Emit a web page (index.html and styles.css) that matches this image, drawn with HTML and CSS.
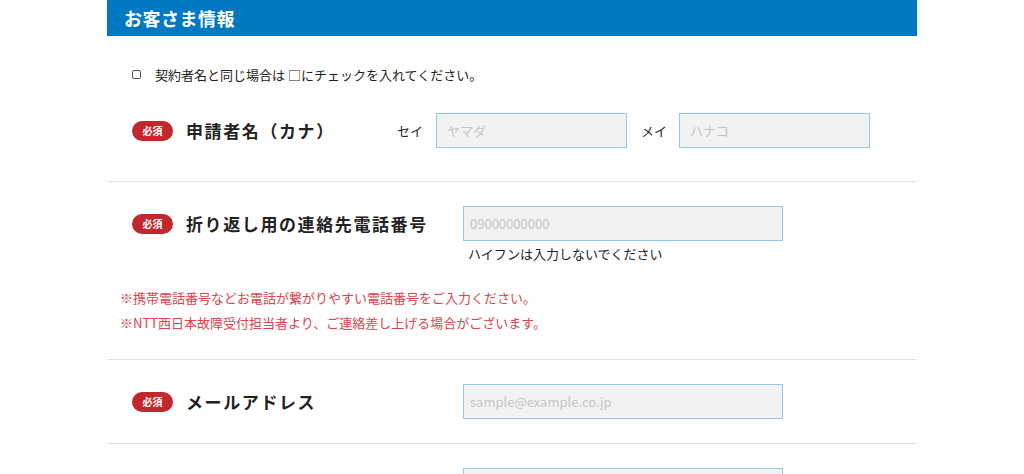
FILE: index.html
```html
<!DOCTYPE html>
<html lang="ja">
<head>
<meta charset="utf-8">
<title>お客さま情報</title>
<link rel="stylesheet" href="styles.css">
</head>
<body>
<section class="form-section">
  <h2 class="section-title">お客さま情報</h2>
  <div class="section-body">
    <label class="same-check">
      <input type="checkbox" class="check-box">
      <span>契約者名と同じ場合は □にチェックを入れてください。</span>
    </label>

    <div class="form-row row-name">
      <div class="field-line">
        <div class="field-head head-name">
          <span class="badge">必須</span>
          <span class="field-label">申請者名（カナ）</span>
        </div>
        <div class="name-group">
          <span class="sub-label">セイ</span>
          <input class="text-input input-half" type="text" placeholder="ヤマダ">
          <span class="sub-label sub-label-2">メイ</span>
          <input class="text-input input-half" type="text" placeholder="ハナコ">
        </div>
      </div>
    </div>

    <div class="form-row">
      <div class="field-line">
        <div class="field-head">
          <span class="badge">必須</span>
          <span class="field-label">折り返し用の連絡先電話番号</span>
        </div>
        <div class="field-body">
          <input class="text-input input-wide" type="text" placeholder="09000000000">
          <p class="hint">ハイフンは入力しないでください</p>
        </div>
      </div>
      <div class="notes">
        <p>※携帯電話番号などお電話が繋がりやすい電話番号をご入力ください。</p>
        <p>※NTT西日本故障受付担当者より、ご連絡差し上げる場合がございます。</p>
      </div>
    </div>

    <div class="form-row">
      <div class="field-line">
        <div class="field-head">
          <span class="badge">必須</span>
          <span class="field-label">メールアドレス</span>
        </div>
        <div class="field-body">
          <input class="text-input input-wide" type="text" placeholder="sample@example.co.jp">
        </div>
      </div>
    </div>

    <div class="form-row">
      <div class="field-line">
        <div class="field-head"></div>
        <div class="field-body">
          <input class="text-input input-wide" type="text">
        </div>
      </div>
    </div>
  </div>
</section>
</body>
</html>
```

FILE: styles.css
```css
* { box-sizing: border-box; }

html, body {
  margin: 0;
  padding: 0;
  background: #ffffff;
}

body {
  font-family: "Noto Sans CJK JP", "Noto Sans", sans-serif;
  color: #222222;
  overflow: hidden;
  height: 474px;
}

.form-section {
  width: 810px;
  margin: 0 auto;
}

.section-title {
  margin: 0;
  height: 36px;
  line-height: 36px;
  padding-left: 17px;
  background: #0079c2;
  color: #ffffff;
  font-size: 18px;
  font-weight: 700;
  letter-spacing: 0.5px;
}

.section-body {
  padding-top: 28px;
}

.same-check {
  display: flex;
  align-items: center;
  height: 20px;
  padding-left: 25px;
  font-size: 13px;
  color: #222222;
  gap: 14px;
}

.check-box {
  appearance: none;
  -webkit-appearance: none;
  margin: 0;
  width: 9px;
  height: 9px;
  border: 1px solid #555555;
  border-radius: 2px;
  background: #ffffff;
}

.form-row {
  padding: 24px 0 24px 0;
  border-bottom: 1px solid #e3e3e3;
}

.row-name {
  padding-top: 29px;
  padding-bottom: 33px;
}

.field-line {
  display: flex;
  align-items: flex-start;
}

.field-head {
  width: 356px;
  padding-left: 25px;
  height: 35px;
  display: flex;
  align-items: center;
  flex-shrink: 0;
}

.head-name {
  width: 290px;
}

.badge {
  display: inline-flex;
  align-items: center;
  justify-content: center;
  width: 41px;
  height: 20px;
  border-radius: 10px;
  background: #c1272d;
  color: #ffffff;
  font-size: 10px;
  font-weight: 700;
  margin-right: 13px;
}

.field-label {
  font-size: 17px;
  font-weight: 700;
  letter-spacing: 1.6px;
  color: #222222;
}

.name-group {
  display: flex;
  align-items: center;
}

.sub-label {
  font-size: 13px;
  width: 39px;
  color: #222222;
}

.sub-label-2 {
  margin-left: 14px;
  width: 38px;
}

.text-input {
  display: block;
  height: 35px;
  margin: 0;
  padding: 0 10px;
  border: 1px solid #94c8ea;
  background: #f2f2f2;
  font-family: "Noto Sans CJK JP", "Noto Sans", sans-serif;
  font-size: 13px;
  color: #333333;
  outline: none;
}

.text-input::placeholder {
  color: #c4c4c4;
}

.input-half {
  width: 191px;
}

.input-wide {
  width: 320px;
  padding-left: 6px;
}

.hint {
  margin: 3px 0 0 5px;
  font-size: 13px;
  line-height: 20px;
  color: #222222;
}

.notes {
  margin-top: 21px;
  padding-left: 13px;
}

.notes p {
  margin: 0;
  font-size: 13px;
  line-height: 25px;
  color: #e0434b;
}
```
